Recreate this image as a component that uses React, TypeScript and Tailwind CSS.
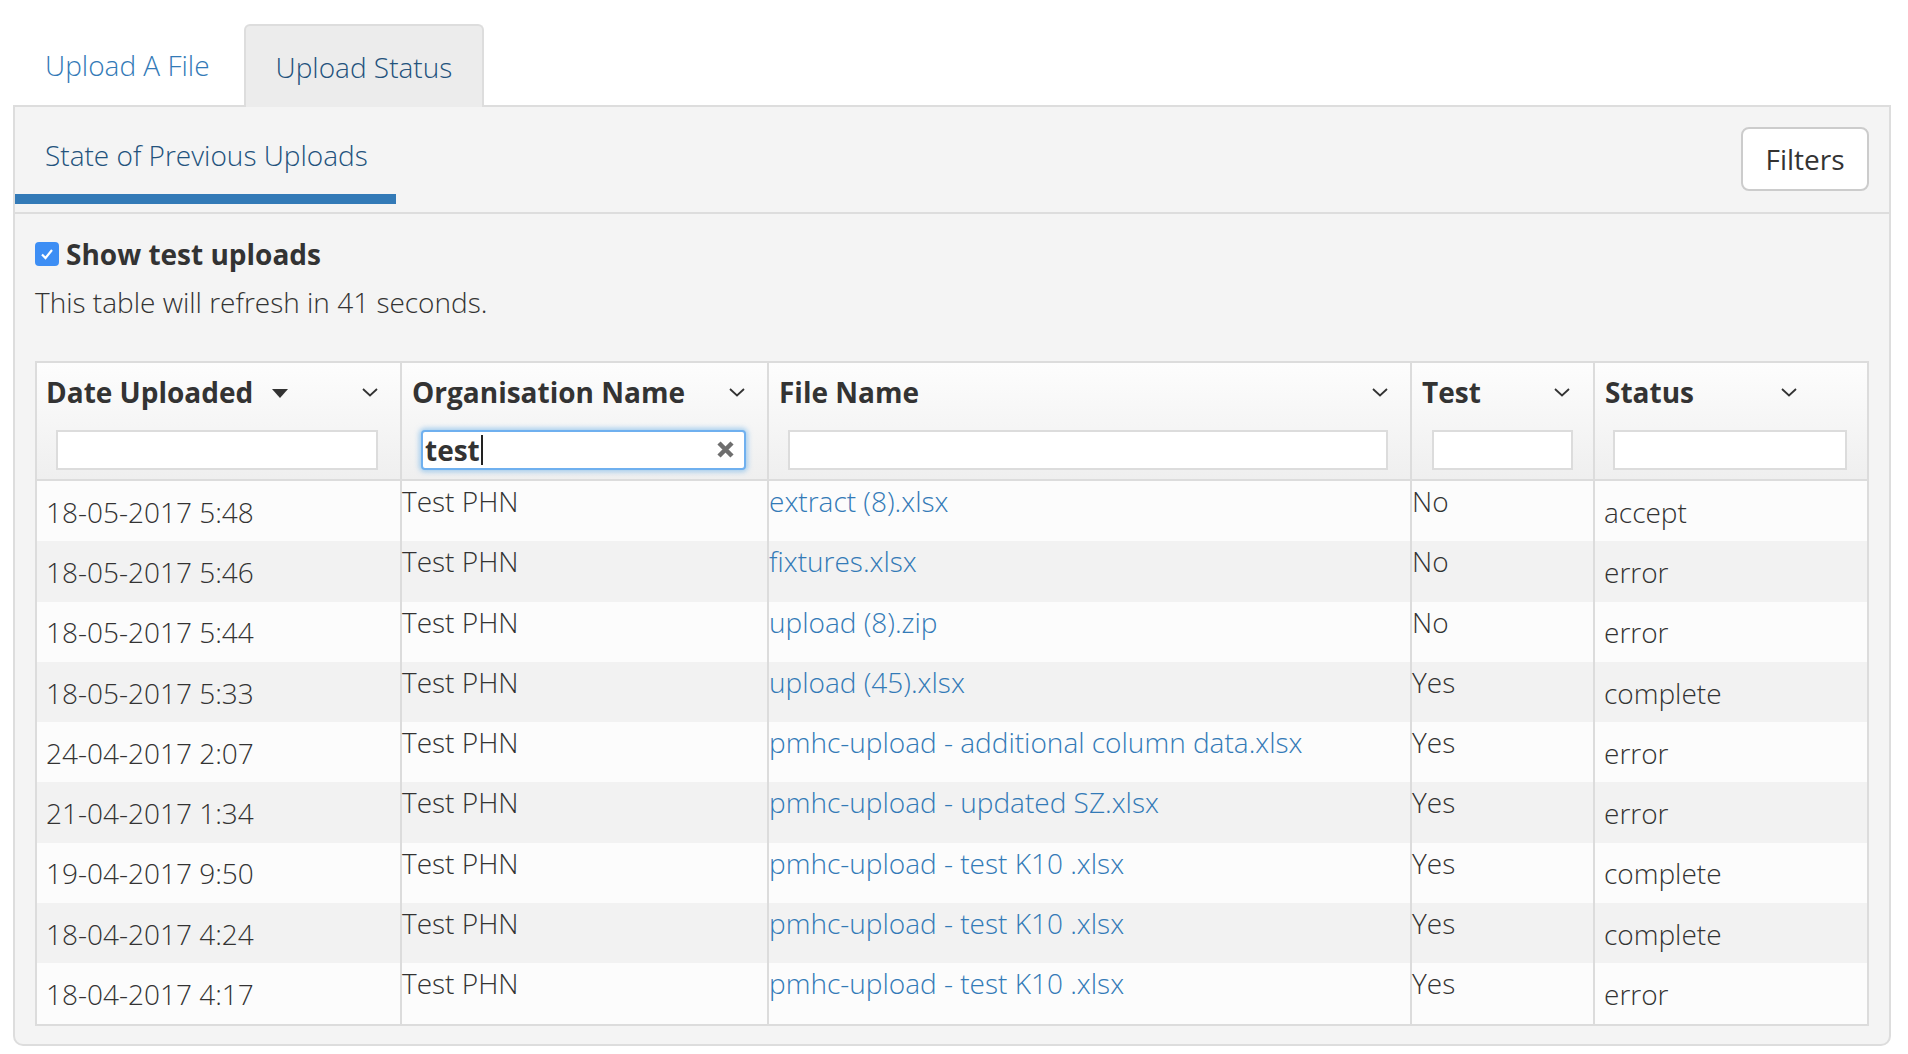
import React from "react"

const rows = [
  { date: "18-05-2017 5:48", org: "Test PHN", file: "extract (8).xlsx", test: "No", status: "accept" },
  { date: "18-05-2017 5:46", org: "Test PHN", file: "fixtures.xlsx", test: "No", status: "error" },
  { date: "18-05-2017 5:44", org: "Test PHN", file: "upload (8).zip", test: "No", status: "error" },
  { date: "18-05-2017 5:33", org: "Test PHN", file: "upload (45).xlsx", test: "Yes", status: "complete" },
  { date: "24-04-2017 2:07", org: "Test PHN", file: "pmhc-upload - additional column data.xlsx", test: "Yes", status: "error" },
  { date: "21-04-2017 1:34", org: "Test PHN", file: "pmhc-upload - updated SZ.xlsx", test: "Yes", status: "error" },
  { date: "19-04-2017 9:50", org: "Test PHN", file: "pmhc-upload - test K10 .xlsx", test: "Yes", status: "complete" },
  { date: "18-04-2017 4:24", org: "Test PHN", file: "pmhc-upload - test K10 .xlsx", test: "Yes", status: "complete" },
  { date: "18-04-2017 4:17", org: "Test PHN", file: "pmhc-upload - test K10 .xlsx", test: "Yes", status: "error" },
]

function Chevron() {
  return (
    <svg width="16" height="9" viewBox="0 0 16 9" className="shrink-0">
      <polyline points="1,1 8,7.5 15,1" fill="none" stroke="#333" strokeWidth="1.8" />
    </svg>
  )
}

function SortDown() {
  return (
    <svg width="16" height="9" viewBox="0 0 16 9" className="ml-[19px] mt-[3px]">
      <polygon points="0,0 16,0 8,9" fill="#333" />
    </svg>
  )
}

function FilterBox() {
  return <div className="ml-[19px] mr-[22px] h-[40px] border-2 border-[#dcdcdc] bg-white" />
}

function HeaderCell({
  title,
  sort,
  first,
  padRight = "pr-[22px]",
  children,
}: {
  title: string
  sort?: boolean
  first?: boolean
  padRight?: string
  children?: React.ReactNode
}) {
  return (
    <div className={`flex flex-col pt-[10px] pb-[9px] ${first ? "" : "border-l-2 border-[#dcdcdc]"}`}>
      <div className={`flex h-[38px] items-center ${first ? "pl-[9px]" : "pl-[10px]"} ${padRight}`}>
        <span className="text-[28px] font-bold leading-[38px] text-[#333]">{title}</span>
        {sort && <SortDown />}
        <div className="flex-1" />
        <Chevron />
      </div>
      <div className="mt-[19px]">{children ?? <FilterBox />}</div>
    </div>
  )
}

export default function App() {
  return (
    <div className="h-[1054px] w-full bg-white pl-[13px] pr-[17px] font-['Open_Sans',sans-serif] text-[#333]">
      {/* tabs */}
      <div className="flex h-[105px] items-end gap-[2px]">
        <div className="flex h-[81px] items-center px-[32px] text-[28px] font-light text-[#337ab7]">
          Upload A File
        </div>
        <div className="relative -mb-[2px] flex h-[83px] items-center rounded-t-[6px] border-2 border-b-0 border-[#dddddd] bg-[#ececec] px-[30px] text-[28px] font-light text-[#23527c]">
          Upload Status
        </div>
      </div>

      {/* panel */}
      <div className="rounded-b-[10px] border-2 border-[#dddddd] bg-[#f4f4f4] pb-[18px]">
        <div className="flex h-[107px] items-start justify-between border-b-2 border-[#dddddd]">
          <div className="h-[97px] w-[381px] border-b-[10px] border-[#337ab7] pl-[30px] pt-[29px] text-[28px] font-light leading-[38px] text-[#23527c]">
            State of Previous Uploads
          </div>
          <button className="mr-[20px] mt-[20px] h-[64px] w-[128px] rounded-[8px] border-2 border-[#cccccc] bg-white text-[28px] text-[#333]">
            Filters
          </button>
        </div>

        <div className="px-[20px] pt-[21px]">
          <label className="flex h-[38px] items-center gap-[7px]">
            <span className="flex h-[24px] w-[24px] items-center justify-center rounded-[4px] bg-[#3d8ef4]">
              <svg width="14" height="12" viewBox="0 0 14 12">
                <polyline points="2,6.5 5.5,10 12,2" fill="none" stroke="white" strokeWidth="2.2" />
              </svg>
            </span>
            <span className="text-[28px] font-bold leading-[38px]">Show test uploads</span>
          </label>
          <p className="mt-[10px] text-[28px] font-light leading-[38px]">This table will refresh in 41 seconds.</p>

          {/* table */}
          <div className="mt-[40px] border-2 border-[#dcdcdc]">
            <div className="grid grid-cols-[363px_367px_643px_183px_1fr] border-b-2 border-[#dcdcdc] bg-linear-to-b from-[#fdfdfd] to-[#efefef]">
              <HeaderCell title="Date Uploaded" sort first />
              <HeaderCell title="Organisation Name">
                <div className="relative ml-[19px] mr-[21px] flex h-[40px] items-center rounded-[4px] border-2 border-[#6fb0ef] bg-white pl-[2px] shadow-[0_0_5px_2px_rgba(102,175,233,0.55)]">
                  <span className="text-[28px] font-bold leading-[36px]">test</span>
                  <span className="ml-[1px] h-[30px] w-[2px] bg-[#222]" />
                  <svg width="19" height="19" viewBox="0 0 19 19" className="absolute right-[9px] top-[8px]">
                    <path d="M3 3 L16 16 M16 3 L3 16" stroke="#6e6e6e" strokeWidth="4.5" />
                  </svg>
                </div>
              </HeaderCell>
              <HeaderCell title="File Name" />
              <HeaderCell title="Test" padRight="pr-[23px]">
                <div className="ml-[20px] mr-[20px] h-[40px] border-2 border-[#dcdcdc] bg-white" />
              </HeaderCell>
              <HeaderCell title="Status" padRight="pr-[70px]">
                <div className="ml-[18px] mr-[20px] h-[40px] border-2 border-[#dcdcdc] bg-white" />
              </HeaderCell>
            </div>

            {rows.map((r, i) => (
              <div
                key={i}
                className={`grid h-[60.3px] grid-cols-[363px_367px_643px_183px_1fr] text-[28px] font-light leading-[36px] ${
                  i % 2 === 0 ? "bg-[#fcfcfc]" : "bg-[#f2f2f2]"
                }`}
              >
                <div className="flex items-center pl-[9px] pt-[1px]">{r.date}</div>
                <div className="border-l-2 border-[#dcdcdc] pt-[2px]">{r.org}</div>
                <div className="border-l-2 border-[#dcdcdc] pt-[2px] text-[#337ab7]">
                  <a href="#">{r.file}</a>
                </div>
                <div className="border-l-2 border-[#dcdcdc] pt-[2px]">{r.test}</div>
                <div className="flex items-center border-l-2 border-[#dcdcdc] pl-[9px] pt-[1px]">{r.status}</div>
              </div>
            ))}
          </div>
        </div>
      </div>
    </div>
  )
}
